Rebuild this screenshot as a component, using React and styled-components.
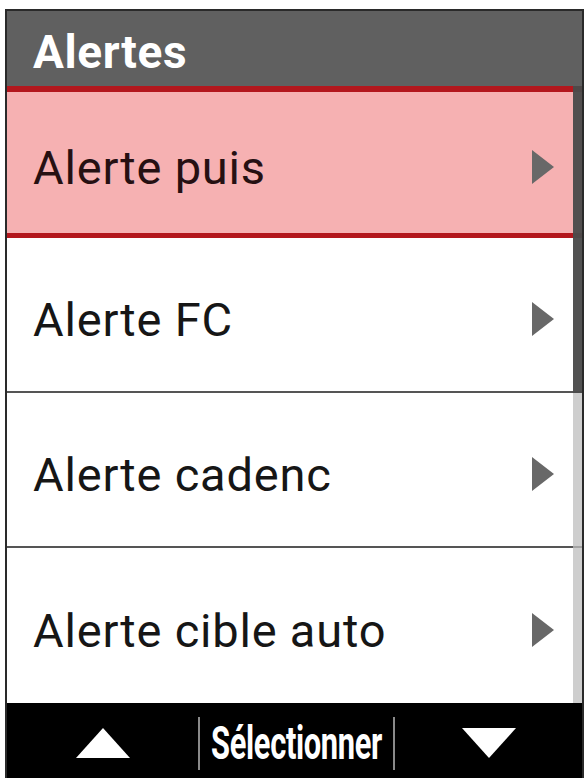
import React from "react";
import styled, { createGlobalStyle } from "styled-components";

const items = [
  { label: "Alerte puis", selected: true },
  { label: "Alerte FC" },
  { label: "Alerte cadenc" },
  { label: "Alerte cible auto" },
];

const App = () => {
  return (
    <>
      <GlobalStyle />
      <Screen>
        <Header>
          <Title>Alertes</Title>
        </Header>
        <ListArea>
          <List>
            {items.map((item, i) => (
              <Row key={item.label} $selected={item.selected} $last={i === items.length - 1}>
                <Label $selected={item.selected}>{item.label}</Label>
                <Chevron width="24" height="36" viewBox="0 0 24 36">
                  <polygon points="1,1 23,18 1,35" fill="#686868" />
                </Chevron>
              </Row>
            ))}
          </List>
          <Scrollbar>
            <Thumb />
          </Scrollbar>
        </ListArea>
        <Footer>
          <FooterCell>
            <svg width="56" height="32" viewBox="0 0 56 32">
              <polygon points="28,1 55,31 1,31" fill="#ffffff" />
            </svg>
          </FooterCell>
          <SelectCell>
            <SelectText>Sélectionner</SelectText>
          </SelectCell>
          <FooterCell>
            <svg width="56" height="32" viewBox="0 0 56 32">
              <polygon points="1,1 55,1 28,31" fill="#ffffff" />
            </svg>
          </FooterCell>
        </Footer>
      </Screen>
    </>
  );
};

const GlobalStyle = createGlobalStyle`
  html, body {
    margin: 0;
    padding: 0;
    background: #ffffff;
  }
  body {
    font-family: Roboto, "Liberation Sans", sans-serif;
  }
`;

const Screen = styled.div`
  margin: 9px 0 0 5px;
  width: 579px;
  height: 769px;
  box-sizing: border-box;
  border: 2px solid #2a2a2a;
  border-bottom: none;
  display: flex;
  flex-direction: column;
  overflow: hidden;
`;

const Header = styled.div`
  height: 75px;
  flex-shrink: 0;
  background: #606060;
  display: flex;
  align-items: center;
  padding: 6px 0 0 26px;
  box-sizing: border-box;
`;

const Title = styled.h1`
  margin: 0;
  color: #ffffff;
  font-size: 46px;
  font-weight: 700;
  letter-spacing: 0.6px;
  line-height: 1;
`;

const ListArea = styled.div`
  position: relative;
  flex: 1;
`;

const List = styled.div`
  display: flex;
  flex-direction: column;
`;

const Row = styled.div`
  display: flex;
  align-items: center;
  justify-content: space-between;
  box-sizing: border-box;
  padding: 9px 27px 0 26px;
  height: ${(p) => (p.$selected ? "152px" : "155px")};
  background: ${(p) => (p.$selected ? "#f6b1b2" : "#ffffff")};
  border-top: ${(p) => (p.$selected ? "6px solid #b3171d" : "none")};
  border-bottom: ${(p) =>
    p.$selected ? "5px solid #b3171d" : p.$last ? "none" : "2px solid #555555"};
`;

const Label = styled.span`
  font-size: 47px;
  line-height: 1;
  letter-spacing: 0.8px;
  color: ${(p) => (p.$selected ? "#261012" : "#161616")};
`;

const Chevron = styled.svg`
  flex-shrink: 0;
`;

const Scrollbar = styled.div`
  position: absolute;
  top: 0;
  right: 0;
  bottom: 0;
  width: 9px;
  background: rgba(190, 190, 190, 0.75);
`;

const Thumb = styled.div`
  height: 307px;
  background: rgba(60, 60, 60, 0.85);
`;

const Footer = styled.div`
  height: 76px;
  flex-shrink: 0;
  background: #000000;
  display: grid;
  grid-template-columns: 191px 197px 1fr;
  align-items: center;
`;

const FooterCell = styled.div`
  display: flex;
  justify-content: center;
  align-items: center;
  padding-top: 4px;
`;

const SelectCell = styled.div`
  height: 53px;
  box-sizing: border-box;
  border-left: 2px solid #8a8a8a;
  border-right: 2px solid #8a8a8a;
  display: flex;
  justify-content: center;
  align-items: center;
  margin-top: 4px;
`;

const SelectText = styled.span`
  display: inline-block;
  color: #ffffff;
  font-size: 46px;
  font-weight: 700;
  line-height: 1;
  letter-spacing: -0.5px;
  transform: scaleX(0.67);
  white-space: nowrap;
`;

export default App;
